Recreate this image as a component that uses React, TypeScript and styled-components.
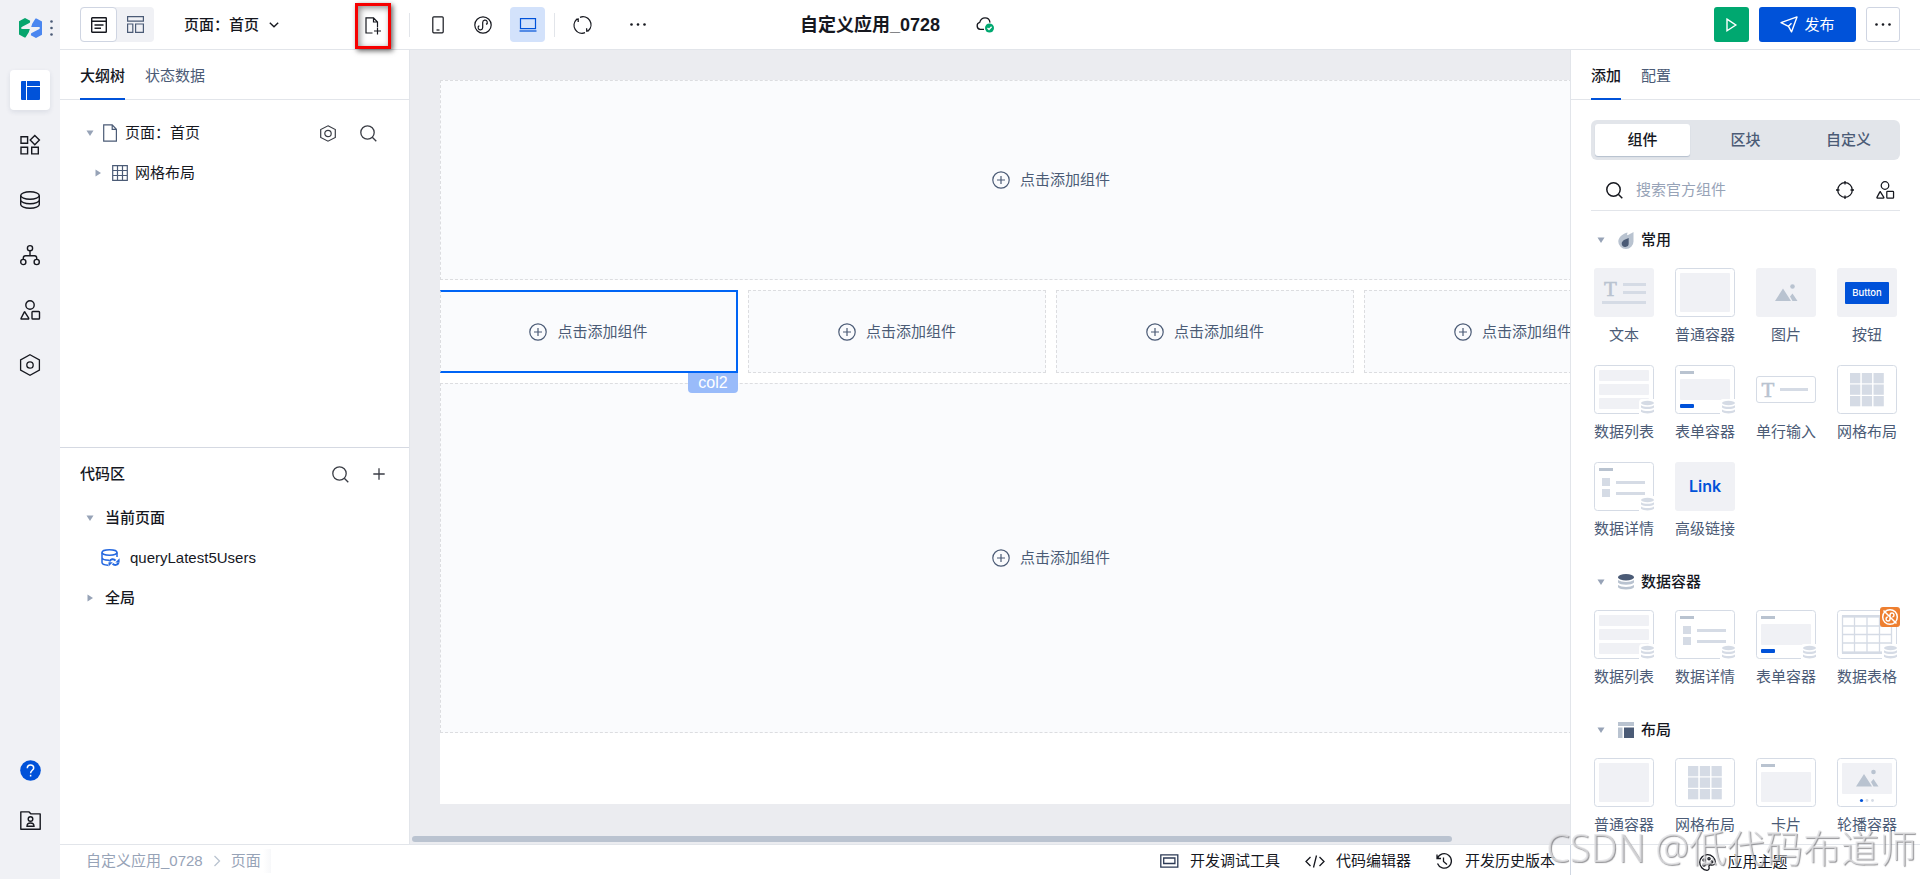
import React from "react";
import styled, { createGlobalStyle, css } from "styled-components";

const c = {
  ink: "#16181f",
  slate: "#4b5b76",
  mute: "#97a3b7",
  line: "#e2e5ea",
  rail: "#f0f1f5",
  stage: "#ebecf0",
  blue: "#0052d9",
  thumb: "#d5dbe5",
  thumbDark: "#b9c3d0",
};

const Global = createGlobalStyle`
  *, *::before, *::after { box-sizing: border-box; }
  body {
    margin: 0;
    color: ${c.ink};
    background: #fff;
    font: 15px/20px "Liberation Sans", "Noto Sans CJK SC", sans-serif;
  }
  button, input { font: inherit; color: inherit; }
  h1, h2, h3, p, ul { margin: 0; padding: 0; font-size: inherit; }
  ul { list-style: none; }
  svg { display: block; flex: none; overflow: visible; }
`;

/* ---------- shell ---------- */

const Shell = styled.div`
  display: flex;
  height: 100vh;
  overflow: hidden;
`;

const Main = styled.div`
  flex: 1;
  min-width: 0;
  display: flex;
  flex-direction: column;
`;

const Body = styled.div`
  flex: 1;
  min-height: 0;
  display: flex;
`;

const PlainButton = styled.button`
  display: flex;
  align-items: center;
  justify-content: center;
  padding: 0;
  border: 0;
  background: none;
  cursor: pointer;
  white-space: nowrap;
`;

/* ---------- left rail ---------- */

const Rail = styled.nav`
  width: 60px;
  flex: none;
  display: flex;
  flex-direction: column;
  align-items: center;
  padding-bottom: 39px;
  background: ${c.rail};
`;

const Brand = styled(PlainButton)`
  width: 60px;
  height: 55px;
  gap: 8px;
  padding-left: 12px;
  margin-bottom: 15px;
`;

const RailList = styled.div`
  display: flex;
  flex-direction: column;
  gap: 15px;
`;

const RailFoot = styled(RailList)`
  margin-top: auto;
  gap: 10px;
`;

const RailButton = styled(PlainButton)<{ $active?: boolean }>`
  width: 40px;
  height: 40px;
  border-radius: 4px;
  ${(p) =>
    p.$active &&
    css`
      background: #fff;
      box-shadow: 0 2px 5px rgba(30, 50, 90, 0.1);
    `}
`;

/* ---------- header ---------- */

const Header = styled.header`
  height: 50px;
  flex: none;
  display: flex;
  align-items: center;
  padding-right: 20px;
  border-bottom: 1px solid ${c.line};
`;

const PageTools = styled.div`
  width: 349px;
  display: flex;
  align-items: center;
  padding: 0 18px 0 20px;
`;

const ViewToggle = styled.div`
  display: flex;
  width: 74px;
  height: 35px;
  border-radius: 4px;
  background: ${c.rail};
`;

const ToggleButton = styled(PlainButton)<{ $active?: boolean }>`
  width: 37px;
  border-radius: 4px;
  ${(p) => p.$active && `background: #fff; border: 1px solid #cfd5e2;`}
`;

const PagePicker = styled(PlainButton)`
  margin-left: 30px;
  gap: 10px;
  font-weight: 500;
`;

const MarkedButton = styled(PlainButton)`
  width: 36px;
  height: 46px;
  margin: 2px 0 0 auto;
  border: 3px solid #f60000;
  box-shadow: 2px 2px 5px rgba(0, 0, 0, 0.6), inset 2px 2px 6px rgba(0, 0, 0, 0.45);
`;

const ToolGroup = styled.div<{ $gap: number }>`
  display: flex;
  align-items: center;
  gap: ${(p) => p.$gap}px;
  padding: 0 9px 0 10px;
`;

const Divider = styled.span`
  width: 1px;
  height: 24px;
  background: ${c.line};
`;

const ToolButton = styled(PlainButton)<{ $active?: boolean }>`
  width: 35px;
  height: 35px;
  border-radius: 4px;
  background: ${(p) => (p.$active ? "#d3e2fb" : "none")};
`;

const TitleGroup = styled.div`
  display: flex;
  align-items: center;
  gap: 36px;
  margin-left: 136px;
`;

const AppTitle = styled.h1`
  font-size: 18px;
  font-weight: 700;
  white-space: nowrap;
`;

const HeaderActions = styled.div`
  display: flex;
  gap: 10px;
  margin-left: auto;
`;

const ActionButton = styled(PlainButton)<{ $tone: "green" | "blue" | "plain" }>`
  height: 35px;
  width: ${(p) => (p.$tone === "blue" ? 97 : p.$tone === "green" ? 35 : 34)}px;
  gap: 6px;
  border-radius: 3px;
  color: ${(p) => (p.$tone === "plain" ? c.ink : "#fff")};
  background: ${(p) => ({ green: "#00a870", blue: c.blue, plain: "#fff" })[p.$tone]};
  ${(p) => p.$tone === "plain" && `border: 1px solid #cfd5e2;`}
`;

/* ---------- side panels ---------- */

const LeftPanel = styled.aside`
  width: 350px;
  flex: none;
  display: flex;
  flex-direction: column;
  border-right: 1px solid ${c.line};
`;

const RightPanel = styled.aside`
  width: 350px;
  flex: none;
  overflow: hidden;
  border-left: 1px solid ${c.line};
`;

const Tabs = styled.div`
  display: flex;
  gap: 20px;
  height: 50px;
  padding: 0 20px;
  border-bottom: 1px solid ${c.line};
`;

const Tab = styled(PlainButton)<{ $active?: boolean }>`
  height: 50px;
  border-top: 4px solid transparent;
  border-bottom: 2px solid ${(p) => (p.$active ? c.blue : "transparent")};
  color: ${(p) => (p.$active ? c.ink : c.slate)};
  font-weight: ${(p) => (p.$active ? 500 : 400)};
`;

const Outline = styled.ul`
  height: 348px;
  padding: 13px 32px 0 26px;
  border-bottom: 1px solid #d5d9e2;
`;

const CodeArea = styled.section`
  padding: 6px 24px 0 20px;
`;

const PanelHead = styled.div`
  display: flex;
  align-items: center;
  height: 40px;
  margin-bottom: 4px;
  h2 {
    font-weight: 500;
    flex: 1;
  }
`;

const TreeRow = styled.li<{ $indent?: number; $strong?: boolean }>`
  display: flex;
  align-items: center;
  height: 40px;
  padding-left: ${(p) => p.$indent ?? 0}px;
  font-weight: ${(p) => (p.$strong ? 500 : 400)};
`;

const Caret = styled.svg.attrs({ viewBox: "0 0 8 8", width: 8, height: 8, "aria-hidden": true })<{ $closed?: boolean }>`
  fill: ${c.mute};
  transform: rotate(${(p) => (p.$closed ? -90 : 0)}deg);
`;

const TreeIcon = styled.span<{ $before: number; $after: number }>`
  margin: 0 ${(p) => p.$after}px 0 ${(p) => p.$before}px;
`;

const RowTools = styled.span`
  display: flex;
  gap: 24px;
  margin-left: auto;
`;

/* ---------- canvas ---------- */

const Stage = styled.main`
  flex: 1;
  min-width: 0;
  display: flex;
  flex-direction: column;
  overflow: hidden;
  background: ${c.stage};
`;

const StageView = styled.div`
  flex: 1;
  padding: 30px 0 32px 30px;
  display: flex;
`;

const Sheet = styled.div`
  width: max(100%, 1222px);
  flex: none;
  display: flex;
  flex-direction: column;
  gap: 10px;
  background: #fff;
`;

const SlotRow = styled.div`
  display: grid;
  grid-template-columns: repeat(4, 1fr);
  gap: 10px;
`;

const SlotBox = styled.div<{ $height: number; $selected?: boolean }>`
  position: relative;
  height: ${(p) => p.$height}px;
  display: flex;
  align-items: center;
  justify-content: center;
  border: 1px dashed #dcdde0;
  background: #fafbfd;
  color: ${c.slate};
  ${(p) =>
    p.$selected &&
    css`
      border: 2px solid #0064f5;
      border-left: 1px dashed #dcdde0;
    `}
`;

const SlotButton = styled(PlainButton)`
  gap: 10px;
`;

const SlotTag = styled.span`
  position: absolute;
  top: calc(100% + 2px);
  right: -2px;
  width: 50px;
  z-index: 1;
  border-radius: 0 0 4px 4px;
  background: #99bbfa;
  color: #fff;
  font-size: 16px;
  line-height: 20px;
  text-align: center;
`;

const ScrollTrack = styled.div`
  height: 8px;
  padding: 0 2px 2px;
`;

const ScrollThumb = styled.div`
  width: 90%;
  height: 6px;
  border-radius: 3px;
  background: #bac3d0;
`;

/* ---------- component library ---------- */

const Library = styled.div`
  padding: 20px 20px 0;
`;

const Segments = styled.div`
  display: grid;
  grid-template-columns: repeat(3, 1fr);
  height: 40px;
  padding: 4px 0;
  border-radius: 6px;
  background: ${c.line};
`;

const Segment = styled(PlainButton)<{ $active?: boolean }>`
  margin: 0 4px;
  border-radius: 3px;
  font-weight: 500;
  color: ${(p) => (p.$active ? c.ink : c.slate)};
  ${(p) => p.$active && `background: #fff; box-shadow: 0 1px 1px #b5bfce;`}
`;

const SearchBar = styled.label`
  display: flex;
  align-items: center;
  height: 51px;
  padding: 10px 6px 0 15px;
  border-bottom: 1px solid ${c.line};
`;

const SearchInput = styled.input`
  flex: 1;
  min-width: 0;
  margin-left: 13px;
  padding: 0;
  border: 0;
  outline: 0;
  background: none;
  &::placeholder {
    color: ${c.mute};
    opacity: 1;
  }
`;

const SearchTools = styled.span`
  display: flex;
  gap: 22px;
`;

const Sections = styled.div`
  display: flex;
  flex-direction: column;
  gap: 22px;
  padding-top: 9px;
`;

const SectionHead = styled(PlainButton)`
  height: 40px;
  padding-left: 6px;
  font-weight: 500;
  svg:nth-child(2) {
    margin: 0 7px 0 13px;
  }
`;

const TileGrid = styled.ul`
  display: grid;
  grid-template-columns: repeat(4, 60px);
  justify-content: space-between;
  gap: 19px 0;
  padding: 8px 3px 0;
`;

const Tile = styled.li`
  position: relative;
  display: flex;
  flex-direction: column;
  align-items: center;
  gap: 7px;
  color: ${c.slate};
  line-height: 22px;
  white-space: nowrap;
`;

const TileBadge = styled.span`
  position: absolute;
  top: -3px;
  right: -3px;
  width: 20px;
  height: 20px;
  border-radius: 3px;
  background: #ee7f30;
`;

/* ---------- footer ---------- */

const Footer = styled.footer`
  height: 35px;
  flex: none;
  display: flex;
  padding-bottom: 4px;
  border-top: 1px solid ${c.line};
`;

const Crumbs = styled.nav`
  flex: 1;
  display: flex;
  align-items: center;
  padding: 2px 0 0 26px;
  gap: 10px;
  color: ${c.mute};
  a {
    color: inherit;
    text-decoration: none;
  }
`;

const CrumbHere = styled.a`
  padding-right: 10px;
  line-height: 24px;
  background: linear-gradient(90deg, #fff 80%, #f7f8fa);
`;

const FootTools = styled.div`
  display: flex;
  align-items: center;
  gap: 25px;
  padding: 2px 15px 0 0;
`;

const FootButton = styled(PlainButton)`
  gap: 11px;
`;

const ThemeArea = styled.div`
  width: 350px;
  display: flex;
  align-items: center;
  justify-content: center;
  padding: 4px 4px 0 0;
  border-left: 1px solid #d0d7e2;
`;

const Watermark = styled.p`
  position: fixed;
  right: 3px;
  bottom: 12px;
  z-index: 5;
  font: 38px/40px "Noto Sans", "Noto Sans CJK SC", sans-serif;
  font-weight: 300;
  color: rgba(225, 225, 228, 0.75);
  text-shadow: 1px 1px 1px rgba(90, 90, 95, 0.65);
  white-space: nowrap;
  pointer-events: none;
`;

/* ---------- icons ---------- */

type IconProps = {
  w: number;
  h?: number;
  color?: string;
  stroke?: number;
  children: React.ReactNode;
};

const Icon = ({ w, h = w, color = c.ink, stroke = 1.3, children }: IconProps) => (
  <svg width={w} height={h} viewBox={`0 0 ${w} ${h}`} fill="none" stroke={color} strokeWidth={stroke} aria-hidden="true">
    {children}
  </svg>
);

const logoHalf = "M0 3.300 6 0l5.200 2.700-.4 2.100L3.600 8.400C1.500 9.500 1.600 11 3.600 11h7.200L9.800 14.200 6.500 19.600H5.500L0 16.500z";

const Logo = () => (
  <svg width="23" height="20" viewBox="0 0 23 20" aria-hidden="true">
    <path d={logoHalf} fill="#06a56d" />
    <path d={logoHalf} fill="#4a86f0" transform="rotate(180 11.500 10)" />
  </svg>
);

const Dots = ({ vertical, color = c.ink }: { vertical?: boolean; color?: string }) => (
  <svg width={vertical ? 3 : 16} height={vertical ? 16 : 3} fill={color} aria-hidden="true">
    {[1.5, 8, 14.5].map((n) => (
      <circle key={n} cx={vertical ? 1.5 : n} cy={vertical ? n : 1.5} r="1.3" />
    ))}
  </svg>
);

const SearchIcon = ({ color = "#3a3d45", stroke = 1.3 }: { color?: string; stroke?: number }) => (
  <Icon w={17} color={color} stroke={stroke}>
    <circle cx="7.500" cy="7.500" r="6.700" />
    <path d="M12.300 12.300 16.300 16.300" />
  </Icon>
);

const ShapesIcon = ({ size = 20 }: { size?: number }) => (
  <svg width={size} height={size} viewBox="0 0 20 20" fill="none" stroke={c.ink} strokeWidth="1.4" aria-hidden="true">
    <circle cx="10" cy="5" r="4.200" />
    <path d="M4.700 11.800 8.700 18.200Q9 19 8.200 19H1.600Q.7 19 1.100 18.200L4 12.600Q4.500 11.600 5 12.400z" strokeLinejoin="round" />
    <rect x="12" y="11.500" width="7.500" height="7.500" rx=".8" />
  </svg>
);

const DatabaseIcon = () => (
  <Icon w={20} h={18} stroke={1.4}>
    <ellipse cx="10" cy="4.500" rx="9.300" ry="3.800" />
    <path d="M.7 4.500v9C.7 15.600 4.800 17.300 10 17.300s9.300-1.700 9.300-3.800v-9M.7 9c0 2.100 4.100 3.800 9.300 3.800S19.300 11.100 19.300 9" />
  </Icon>
);

const CloudIcon = () => (
  <Icon w={18} h={16}>
    <path d="M8 12.400H4.200A3.600 3.600 0 0 1 3.700 5.400C4.600 2.400 6.500.8 9 .8c2.900 0 4.700 2 5 4.800" />
    <circle cx="13.500" cy="11" r="4.500" fill="#00a870" stroke="none" />
    <path d="m11.500 11 1.500 1.500 2.600-2.700" stroke="#fff" />
  </Icon>
);

const QueryIcon = () => (
  <Icon w={19} h={18} color="#2468e0" stroke={1.5}>
    <ellipse cx="8.500" cy="3.500" rx="7.500" ry="2.700" />
    <path d="M1 3.500v10c0 1.400 2.500 2.500 6 2.700M16 3.500V8M1 8.500c0 1.500 3 2.700 7 2.700" />
    <path d="M8.500 12.500c.8-2.400 4.200-3 6-.9M17.600 13.500c-.7 2.600-4.200 3.300-6 1.200" strokeWidth="2" />
    <path d="M18.600 9.200v4.300h-4.300zM7.500 17.600v-4.400h4.300z" fill="#2468e0" stroke="none" />
  </Icon>
);

const railIcons: { label: string; icon: React.ReactNode }[] = [
  {
    label: "页面设计",
    icon: (
      <svg width="19" height="19" viewBox="0 0 19 19" fill={c.blue} aria-hidden="true">
        <path d="M1 0h4v19H1a1 1 0 0 1-1-1V1a1 1 0 0 1 1-1zM6 0h12a1 1 0 0 1 1 1v4H6zM6 6h13v12a1 1 0 0 1-1 1H6z" />
      </svg>
    ),
  },
  {
    label: "组件",
    icon: (
      <Icon w={20} stroke={1.4}>
        <path d="M1 1.700h6.600v6.600H1zM1 12.300h6.600v6.600H1zM11.700 12.300h6.600v6.600h-6.600zM14.800.5l4.600 4.600-4.600 4.600-4.600-4.600z" />
      </Icon>
    ),
  },
  { label: "数据", icon: <DatabaseIcon /> },
  {
    label: "流程",
    icon: (
      <Icon w={20} stroke={1.4}>
        <circle cx="10" cy="3.200" r="2.600" />
        <circle cx="3.300" cy="17" r="2.600" />
        <circle cx="16.700" cy="17" r="2.600" />
        <path d="M10 5.800v5M3.300 14.200V13q0-2.200 2.200-2.200h9q2.200 0 2.200 2.200v1.200" />
      </Icon>
    ),
  },
  { label: "素材", icon: <ShapesIcon /> },
  {
    label: "设置",
    icon: (
      <Icon w={20} h={22}>
        <path d="M10 .8 19.400 6v10L10 21.200.6 16V6z" />
        <circle cx="10" cy="11" r="3.200" />
      </Icon>
    ),
  },
];

/* ---------- thumbnails ---------- */

const Frame = () => <rect x=".5" y=".5" width="59" height="48" rx="3" fill="#fff" stroke={c.thumb} />;
const Fill = () => <rect width="60" height="49" rx="3" fill={c.rail} />;
const Bar = () => <rect x="5" y="6" width="14" height="3" fill={c.thumbDark} />;
const Pale = ({ y, h }: { y: number; h: number }) => <rect x="5" y={y} width="50" height={h} rx="1" fill={c.rail} />;
const Stack = () => (
  <g>
    <path d="M48 34h14v17H45V38q0-4 3-4z" fill="#fff" />
    <g fill={c.thumb}>
      <ellipse cx="53.500" cy="38" rx="6.500" ry="2.200" />
      <path d="M47 40.200c3 2 10 2 13 0v2.200c-3 2.200-10 2.200-13 0zM47 44.600c3 2 10 2 13 0v2.200c-3 2.200-10 2.200-13 0z" />
    </g>
  </g>
);
const Hills = ({ y = 0 }: { y?: number }) => (
  <g fill={c.thumbDark} transform={`translate(0 ${y})`}>
    <path d="m19 33 8-12.500L35 33zM36.500 33 34 28.500l2.500-3L41.500 33z" />
    <circle cx="36.500" cy="18.500" r="2.300" />
  </g>
);
const Letter = ({ x, y }: { x: number; y: number }) => (
  <text x={x} y={y} fontFamily="Liberation Serif" fontSize="21" fill={c.thumbDark} stroke={c.thumbDark} strokeWidth=".6">
    T
  </text>
);

const thumbs: Record<string, React.ReactNode> = {
  text: (
    <>
      <Fill />
      <Letter x={10} y={28} />
      <path d="M29 15h23v3H29zM29 23h23v3H29zM8 33h44v3H8z" fill={c.thumb} />
    </>
  ),
  box: (
    <>
      <Frame />
      <Pale y={5} h={39} />
    </>
  ),
  image: (
    <>
      <Fill />
      <Hills />
    </>
  ),
  button: (
    <>
      <Fill />
      <rect x="8" y="14" width="44" height="22" rx="1" fill={c.blue} />
      <text x="30" y="28" textAnchor="middle" fontFamily="Inter" fontSize="9.500" fontWeight="500" fill="#fff">
        Button
      </text>
    </>
  ),
  list: (
    <>
      <Frame />
      <Pale y={5} h={11} />
      <Pale y={19} h={11} />
      <Pale y={33} h={11} />
      <Stack />
    </>
  ),
  form: (
    <>
      <Frame />
      <Bar />
      <Pale y={14} h={21} />
      <rect x="5" y="39" width="14" height="4" rx="1" fill={c.blue} />
      <Stack />
    </>
  ),
  input: (
    <>
      <rect x=".5" y="11.500" width="59" height="26" rx="2.500" fill="#fff" stroke={c.thumb} />
      <Letter x={5.5} y={32} />
      <path d="M24 23h28v3H24z" fill={c.thumb} />
    </>
  ),
  grid: (
    <>
      <Frame />
      {[8, 19.500, 31].map((y) =>
        [13, 24.800, 36.500].map((x) => <rect key={`${x}-${y}`} x={x} y={y} width="10.300" height="10.300" fill={c.thumb} />)
      )}
    </>
  ),
  detail: (
    <>
      <Frame />
      <Bar />
      <path d="M8 16h8v8H8zM8 27h8v8H8zM22 19h29v3H22zM22 30h29v3H22z" fill={c.thumb} />
      <Stack />
    </>
  ),
  link: (
    <>
      <Fill />
      <text x="30" y="30" textAnchor="middle" fontFamily="Inter" fontSize="16" fontWeight="600" fill={c.blue}>
        Link
      </text>
    </>
  ),
  table: (
    <>
      <Frame />
      <path d="M5.500 6.500h49v36h-49zM5.500 16h49M5.500 24.500h49M5.500 33h49M17.500 6v37M30 6v37M42.500 6v37" fill="none" stroke={c.thumb} strokeWidth="1.300" />
      <path d="M5 5h50v2.500H5zM5 41.500h40V44H5z" fill={c.thumb} />
      <Stack />
    </>
  ),
  card: (
    <>
      <Frame />
      <Bar />
      <Pale y={14} h={30} />
    </>
  ),
  carousel: (
    <>
      <Frame />
      <Pale y={5} h={31} />
      <Hills y={-4.500} />
      <circle cx="24.500" cy="42.500" r="1.600" fill={c.blue} />
      <circle cx="30" cy="42.500" r="1.400" fill={c.thumb} />
      <circle cx="35.500" cy="42.500" r="1.400" fill={c.thumb} />
    </>
  ),
};

const sections = [
  {
    title: "常用",
    icon: (
      <svg width="16" height="17" viewBox="0 0 16 17" aria-hidden="true">
        <path d="M15.500 0v9.500A7.600 7.600 0 0 1 .3 9.500C.3 5.200 5 1.500 9.500.4L9 3.200C11 2.600 13.500 1.300 15.500 0z" fill={c.thumbDark} />
        <path d="M10.700 6v5.300a3.500 3.500 0 0 1-7 .3C3.800 8.800 7.500 7 10.700 6z" fill={c.slate} />
      </svg>
    ),
    tiles: [
      ["text", "文本"],
      ["box", "普通容器"],
      ["image", "图片"],
      ["button", "按钮"],
      ["list", "数据列表"],
      ["form", "表单容器"],
      ["input", "单行输入"],
      ["grid", "网格布局"],
      ["detail", "数据详情"],
      ["link", "高级链接"],
    ],
  },
  {
    title: "数据容器",
    icon: (
      <svg width="16" height="16" viewBox="0 0 16 16" aria-hidden="true">
        <ellipse cx="8" cy="3.200" rx="8" ry="3.200" fill={c.slate} />
        <path d="M0 6c3.500 2.600 12.500 2.600 16 0v2.500c-2 3-14 3-16 0zM0 11c3.500 2.600 12.500 2.600 16 0v2.300c-2 3-14 3-16 0z" fill={c.thumbDark} />
      </svg>
    ),
    tiles: [
      ["list", "数据列表"],
      ["detail", "数据详情"],
      ["form", "表单容器"],
      ["table", "数据表格"],
    ],
  },
  {
    title: "布局",
    icon: (
      <svg width="16" height="16" viewBox="0 0 16 16" aria-hidden="true">
        <path d="M0 0h16v4H0zM0 5.500h4.500V16H0z" fill={c.thumbDark} />
        <path d="M6 5.500h10V16H6z" fill={c.slate} />
      </svg>
    ),
    tiles: [
      ["box", "普通容器"],
      ["grid", "网格布局"],
      ["card", "卡片"],
      ["carousel", "轮播容器"],
    ],
  },
];

/* ---------- pieces ---------- */

const Triangle = ({ closed }: { closed?: boolean }) => (
  <Caret $closed={closed}>
    <path d="M.5 1.500h7L4 7z" />
  </Caret>
);

const Slot = ({ height, selected, tag }: { height: number; selected?: boolean; tag?: string }) => (
  <SlotBox $height={height} $selected={selected}>
    <SlotButton type="button">
      <Icon w={18} color={c.slate} stroke={1.2}>
        <circle cx="9" cy="9" r="8.200" />
        <path d="M9 5v8M5 9h8" />
      </Icon>
      点击添加组件
    </SlotButton>
    {tag && <SlotTag>{tag}</SlotTag>}
  </SlotBox>
);

const MiniProgram = <path d="M5.300 9.600a2.300 2.300 0 1 0 3.400 2V6.400a2.300 2.300 0 1 1 3.400 2" />;

export default function App() {
  return (
    <Shell>
      <Global />
      <Rail aria-label="主导航">
        <Brand type="button" aria-label="菜单">
          <Logo />
          <Dots vertical color={c.slate} />
        </Brand>
        <RailList>
          {railIcons.map((r, i) => (
            <RailButton key={r.label} type="button" aria-label={r.label} $active={i === 0}>
              {r.icon}
            </RailButton>
          ))}
        </RailList>
        <RailFoot>
          <RailButton type="button" aria-label="帮助">
            <Icon w={21} color="#fff" stroke={1.5}>
              <circle cx="10.500" cy="10.500" r="10.300" fill={c.blue} stroke="none" />
              <path d="M7.300 8.200c0-2 1.400-3.300 3.200-3.300s3.200 1.200 3.200 3c0 2.200-3.100 2.500-3.100 5.300" />
              <path d="M10.600 14.800v1.700" />
            </Icon>
          </RailButton>
          <RailButton type="button" aria-label="资源">
            <Icon w={21} h={19} stroke={1.4}>
              <path d="M.8 18.200V.9h8.300l1.900 2h9.200v15.300z" strokeLinejoin="round" />
              <circle cx="10.500" cy="8" r="2.300" />
              <path d="M7 15.200c0-4.200 7-4.200 7 0z" />
            </Icon>
          </RailButton>
        </RailFoot>
      </Rail>

      <Main>
        <Header>
          <PageTools>
            <ViewToggle>
              <ToggleButton type="button" aria-label="页面视图" $active>
                <Icon w={16} stroke={1.4}>
                  <rect x=".7" y=".7" width="14.600" height="14.600" rx=".6" />
                  <path d="M1 4.300h14M3.500 8h9M3.500 11.300h6.500" />
                </Icon>
              </ToggleButton>
              <ToggleButton type="button" aria-label="布局视图">
                <Icon w={17} color={c.slate} stroke={1.2}>
                  <path d="M.6.6h15.800v4.600H.6zM.6 8h5.200v8.400H.6zM8.600 8h7.800v8.400H8.600z" />
                </Icon>
              </ToggleButton>
            </ViewToggle>
            <PagePicker type="button">
              页面：首页
              <Icon w={10} h={6} stroke={1.4}>
                <path d="m.8.8 4.200 4 4.200-4" />
              </Icon>
            </PagePicker>
            <MarkedButton type="button" aria-label="新建页面">
              <Icon w={16} h={18} stroke={1.2}>
                <path d="M7.500 16H1V.8h7.500L12.500 5v5M8.500.8V5h4M9 14h7M12.500 10.500v7" />
              </Icon>
            </MarkedButton>
          </PageTools>
          <Divider />
          <ToolGroup $gap={10}>
            <ToolButton type="button" aria-label="手机">
              <Icon w={12} h={18} stroke={1.2}>
                <rect x=".8" y=".8" width="10.400" height="16" rx="1" />
                <path d="M4.500 14h3" />
              </Icon>
            </ToolButton>
            <ToolButton type="button" aria-label="小程序">
              <Icon w={18} stroke={1.200}>
                <circle cx="9" cy="9" r="8.200" />
                {MiniProgram}
              </Icon>
            </ToolButton>
            <ToolButton type="button" aria-label="电脑" $active>
              <Icon w={18} h={14} color={c.blue} stroke={1.200}>
                <rect x="1.500" y=".6" width="15" height="10" />
                <path d="M.5 13h17" />
              </Icon>
            </ToolButton>
          </ToolGroup>
          <Divider />
          <ToolGroup $gap={20}>
            <ToolButton type="button" aria-label="刷新">
              <Icon w={19} h={18} stroke={1.300}>
                <path d="M7 1.300a8 8 0 0 1 8.500 13.200M12 16.700A8 8 0 0 1 3.500 3.500M3 3.300l2.200-.3v3M16 14.700l-2.200.5-.2-3" />
              </Icon>
            </ToolButton>
            <ToolButton type="button" aria-label="更多工具">
              <Dots />
            </ToolButton>
          </ToolGroup>
          <TitleGroup>
            <AppTitle>自定义应用_0728</AppTitle>
            <CloudIcon />
          </TitleGroup>
          <HeaderActions>
            <ActionButton type="button" $tone="green" aria-label="预览">
              <Icon w={11} h={14} color="#fff" stroke={1.400}>
                <path d="M1 1.200 9.800 7 1 12.800z" />
              </Icon>
            </ActionButton>
            <ActionButton type="button" $tone="blue">
              <Icon w={18} h={17} color="#fff" stroke={1.400}>
                <path d="M1 6.700 17 .9l-5.500 15-3-5.600zM8.500 10.300l3-3" strokeLinejoin="round" />
              </Icon>
              发布
            </ActionButton>
            <ActionButton type="button" $tone="plain" aria-label="更多">
              <Dots />
            </ActionButton>
          </HeaderActions>
        </Header>

        <Body>
          <LeftPanel>
            <Tabs>
              <Tab type="button" $active>
                大纲树
              </Tab>
              <Tab type="button">状态数据</Tab>
            </Tabs>
            <Outline>
              <TreeRow>
                <Triangle />
                <TreeIcon $before={9} $after={8}>
                  <Icon w={14} h={18} color={c.slate} stroke={1.2}>
                    <path d="M.7.8h8.500l4.200 4.500v11.900H.7zM9.200.8v4.500h4.200" />
                  </Icon>
                </TreeIcon>
                页面：首页
                <RowTools>
                  <PlainButton type="button" aria-label="页面设置">
                    <Icon w={16} h={17} color="#3a3d45" stroke={1.200}>
                      <path d="M8 .8 15.300 4.500v8L8 16.200.7 12.500v-8z" />
                      <circle cx="8" cy="8.500" r="3.200" />
                    </Icon>
                  </PlainButton>
                  <PlainButton type="button" aria-label="搜索大纲">
                    <SearchIcon />
                  </PlainButton>
                </RowTools>
              </TreeRow>
              <TreeRow $indent={8}>
                <Triangle closed />
                <TreeIcon $before={10} $after={7}>
                  <Icon w={16} color={c.slate} stroke={1.200}>
                    <path d="M.7.7h14.600v14.600H.7zM5.500.7v14.600M10.500.7v14.600M.7 5.500h14.600M.7 10.500h14.600" />
                  </Icon>
                </TreeIcon>
                网格布局
              </TreeRow>
            </Outline>
            <CodeArea>
              <PanelHead>
                <h2>代码区</h2>
                <RowTools>
                  <PlainButton type="button" aria-label="搜索代码">
                    <SearchIcon />
                  </PlainButton>
                  <PlainButton type="button" aria-label="新建代码">
                    <Icon w={12} color="#3a3d45" stroke={1.3}>
                      <path d="M6 .3v11.400M.3 6h11.400" />
                    </Icon>
                  </PlainButton>
                </RowTools>
              </PanelHead>
              <ul>
                <TreeRow $indent={6} $strong>
                  <Triangle />
                  <TreeIcon $before={11} $after={0} />
                  当前页面
                </TreeRow>
                <TreeRow $indent={21}>
                  <TreeIcon $before={0} $after={10}>
                    <QueryIcon />
                  </TreeIcon>
                  queryLatest5Users
                </TreeRow>
                <TreeRow $indent={6} $strong>
                  <Triangle closed />
                  <TreeIcon $before={11} $after={0} />
                  全局
                </TreeRow>
              </ul>
            </CodeArea>
          </LeftPanel>

          <Stage>
            <StageView>
              <Sheet>
                <Slot height={200} />
                <SlotRow>
                  <Slot height={83} selected tag="col2" />
                  <Slot height={83} />
                  <Slot height={83} />
                  <Slot height={83} />
                </SlotRow>
                <Slot height={350} />
              </Sheet>
            </StageView>
            <ScrollTrack>
              <ScrollThumb />
            </ScrollTrack>
          </Stage>

          <RightPanel>
            <Tabs>
              <Tab type="button" $active>
                添加
              </Tab>
              <Tab type="button">配置</Tab>
            </Tabs>
            <Library>
              <Segments>
                <Segment type="button" $active>
                  组件
                </Segment>
                <Segment type="button">区块</Segment>
                <Segment type="button">自定义</Segment>
              </Segments>
              <SearchBar>
                <SearchIcon color={c.ink} stroke={1.5} />
                <SearchInput type="text" placeholder="搜索官方组件" aria-label="搜索官方组件" />
                <SearchTools>
                  <PlainButton type="button" aria-label="定位">
                    <Icon w={18} stroke={1.3}>
                      <circle cx="9" cy="9" r="7.300" />
                      <path d="M9 0v3.500M9 14.500V18M0 9h3.500M14.500 9H18" />
                    </Icon>
                  </PlainButton>
                  <PlainButton type="button" aria-label="组件库">
                    <ShapesIcon size={18} />
                  </PlainButton>
                </SearchTools>
              </SearchBar>
              <Sections>
                {sections.map((s) => (
                  <section key={s.title}>
                    <SectionHead type="button">
                      <Triangle />
                      {s.icon}
                      {s.title}
                    </SectionHead>
                    <TileGrid>
                      {s.tiles.map(([kind, label]) => (
                        <Tile key={label}>
                          <svg width="60" height="49" viewBox="0 0 60 49" aria-hidden="true">
                            {thumbs[kind]}
                          </svg>
                          {label}
                          {kind === "table" && (
                            <TileBadge>
                              <Icon w={20} color="#fff" stroke={1.500}>
                                <circle cx="10" cy="10" r="7.300" />
                                <path d="M7.800 10a2 2 0 1 0 2.200 2.300V7.800A2 2 0 1 1 12.300 10M3.500 3.500l13 13" />
                              </Icon>
                            </TileBadge>
                          )}
                        </Tile>
                      ))}
                    </TileGrid>
                  </section>
                ))}
              </Sections>
            </Library>
          </RightPanel>
        </Body>

        <Footer>
          <Crumbs aria-label="位置">
            <a href="#app">自定义应用_0728</a>
            <Icon w={8} h={12} color="#b9c3d0" stroke={1.300}>
              <path d="m1.500 1 5 5-5 5" />
            </Icon>
            <CrumbHere href="#page">页面</CrumbHere>
          </Crumbs>
          <FootTools>
            <FootButton type="button">
              <Icon w={19} h={14} color="#2c3a55" stroke={1.300}>
                <path d="M.8.8h17v12.400H.8zM3.700 4h11.200v5.500H3.700z" />
              </Icon>
              开发调试工具
            </FootButton>
            <FootButton type="button">
              <Icon w={20} h={13} stroke={1.300}>
                <path d="M5.500 2 1 6.500 5.500 11M14.500 2 19 6.500 14.500 11M11.500.5l-3 12" />
              </Icon>
              代码编辑器
            </FootButton>
            <FootButton type="button">
              <Icon w={18} h={16} stroke={1.300}>
                <path d="M1 1.500V5.500H5M1.500 5.300A7.200 7.200 0 1 1 1.500 10.500M7.500 4.500v4l3.500 3" />
              </Icon>
              开发历史版本
            </FootButton>
          </FootTools>
          <ThemeArea>
            <FootButton type="button">
              <Icon w={17} stroke={1.300}>
                <path d="M8 16.300A7.800 7.800 0 1 1 16.300 8c.2 3-2.500 3.300-4.500 3-1.500-.2-2.200.8-1.800 2 .5 1.500-.2 3.300-2 3.300z" />
                <circle cx="5" cy="6" r="1.100" />
                <circle cx="10" cy="4.700" r="1.100" />
                <circle cx="5" cy="11" r="1.100" />
                <circle cx="13" cy="7.700" r=".9" />
              </Icon>
              应用主题
            </FootButton>
          </ThemeArea>
        </Footer>
      </Main>
      <Watermark>CSDN @低代码布道师</Watermark>
    </Shell>
  );
}
